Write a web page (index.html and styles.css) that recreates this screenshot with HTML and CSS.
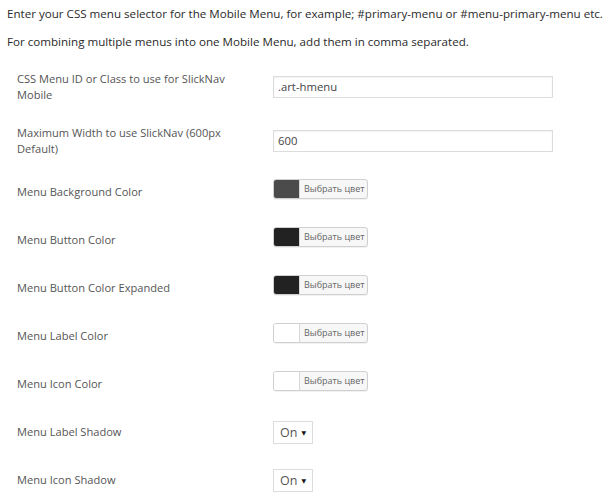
FILE: index.html
```html
<!DOCTYPE html>
<html>
<head>
<meta charset="utf-8">
<link rel="stylesheet" href="styles.css">
</head>
<body>
<div class="page">
  <p class="intro">Enter your CSS menu selector for the Mobile Menu, for example; #primary-menu or #menu-primary-menu etc.</p>
  <p class="intro">For combining multiple menus into one Mobile Menu, add them in comma separated.</p>
  <div class="table">
    <div class="row tall">
      <div class="label">CSS Menu ID or Class to use for SlickNav Mobile</div>
      <div class="control"><div class="input">.art-hmenu</div></div>
    </div>
    <div class="row tall">
      <div class="label">Maximum Width to use SlickNav (600px Default)</div>
      <div class="control"><div class="input">600</div></div>
    </div>
    <div class="row">
      <div class="label">Menu Background Color</div>
      <div class="control"><div class="picker"><span class="swatch" style="background:#4b4b4b"></span><span class="pick-text">Выбрать цвет</span></div></div>
    </div>
    <div class="row">
      <div class="label">Menu Button Color</div>
      <div class="control"><div class="picker"><span class="swatch" style="background:#222222"></span><span class="pick-text">Выбрать цвет</span></div></div>
    </div>
    <div class="row">
      <div class="label">Menu Button Color Expanded</div>
      <div class="control"><div class="picker"><span class="swatch" style="background:#222222"></span><span class="pick-text">Выбрать цвет</span></div></div>
    </div>
    <div class="row">
      <div class="label">Menu Label Color</div>
      <div class="control"><div class="picker"><span class="swatch" style="background:#ffffff"></span><span class="pick-text">Выбрать цвет</span></div></div>
    </div>
    <div class="row">
      <div class="label">Menu Icon Color</div>
      <div class="control"><div class="picker"><span class="swatch" style="background:#ffffff"></span><span class="pick-text">Выбрать цвет</span></div></div>
    </div>
    <div class="row">
      <div class="label">Menu Label Shadow</div>
      <div class="control"><div class="select"><span>On</span><span class="arrow">▼</span></div></div>
    </div>
    <div class="row">
      <div class="label">Menu Icon Shadow</div>
      <div class="control"><div class="select"><span>On</span><span class="arrow">▼</span></div></div>
    </div>
  </div>
</div>
</body>
</html>
```
FILE: styles.css
```css
html, body {
  margin: 0;
  padding: 0;
  background: #fff;
}
body {
  font-family: "Open Sans", "Liberation Sans", sans-serif;
  color: #444;
}
.page {
  padding: 0 0 0 7px;
}
.intro {
  margin: 0;
  font-size: 11.6px;
  line-height: 28px;
  color: #2a2a2a;
  white-space: nowrap;
}
.table {
  margin-top: 4px;
}
.row {
  display: grid;
  grid-template-columns: 222px 1fr;
  gap: 34px;
  align-items: center;
  height: 48px;
  padding-left: 10px;
}
.row.tall {
  height: 54px;
}
.label {
  font-size: 11.1px;
  line-height: 16px;
  color: #555;
}
.input {
  width: 280px;
  height: 22px;
  box-sizing: border-box;
  border: 1px solid #dcdcdc;
  box-shadow: inset 0 1px 2px rgba(0,0,0,0.06);
  font-size: 11.3px;
  line-height: 20px;
  padding-left: 4px;
  color: #444;
}
.picker {
  display: inline-flex;
  width: 95px;
  height: 20px;
  box-sizing: border-box;
  border: 1px solid #cfcfcf;
  border-radius: 3px;
  background: #f7f7f7;
  overflow: hidden;
  margin-top: -3px;
  box-shadow: 0 1px 0 rgba(0,0,0,0.05);
}
.swatch {
  width: 25px;
  height: 100%;
  border-right: 1px solid #d8d8d8;
  flex: none;
}
.pick-text {
  font-size: 9px;
  line-height: 18px;
  color: #666;
  padding-left: 4px;
  white-space: nowrap;
}
.select {
  display: inline-flex;
  align-items: center;
  justify-content: space-between;
  width: 40px;
  height: 23px;
  box-sizing: border-box;
  border: 1px solid #dcdcdc;
  padding: 0 6px 0 6px;
  font-size: 12.5px;
  color: #555;
  background: #fff;
}
.arrow {
  font-size: 6px;
  color: #111;
  font-family: "DejaVu Sans", sans-serif;
}
```
